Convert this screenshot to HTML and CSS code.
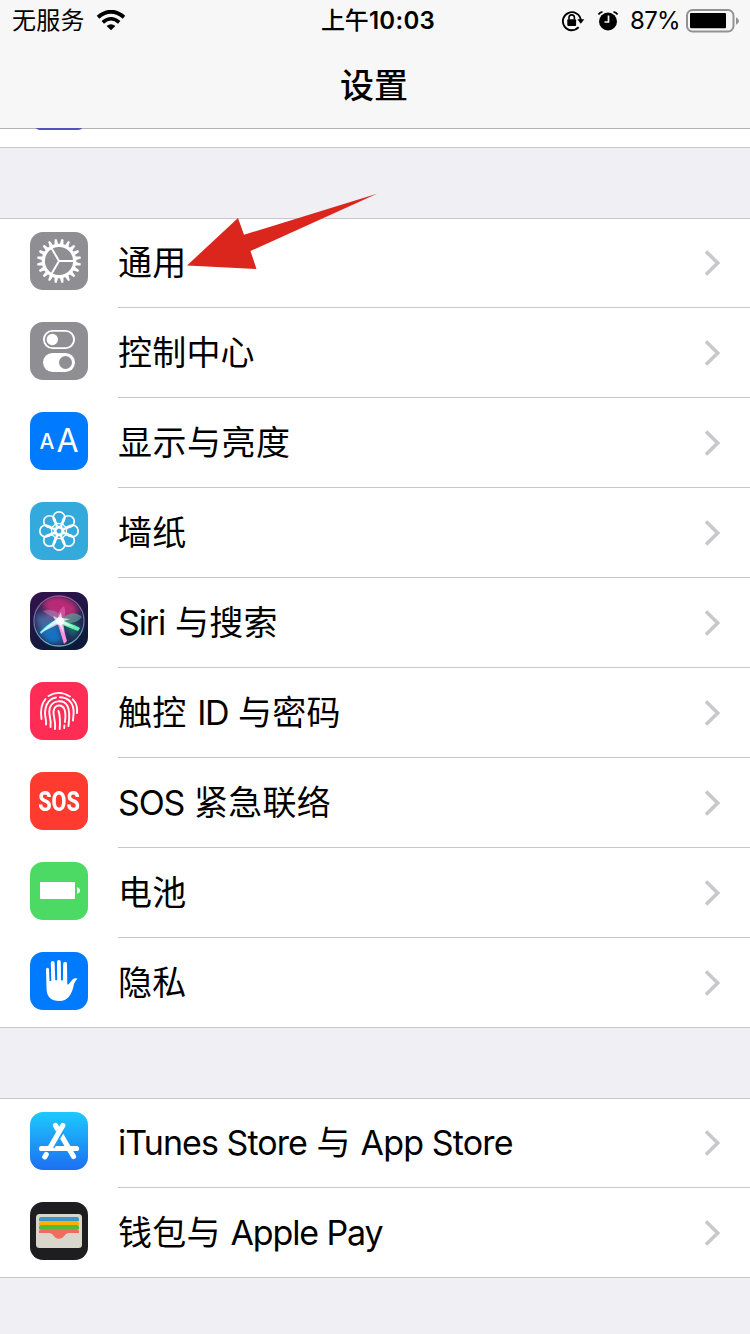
FILE: index.html
```html
<!DOCTYPE html>
<html lang="zh-CN">
<head>
<meta charset="utf-8">
<title>设置</title>
<link rel="stylesheet" href="styles.css">
</head>
<body>
<svg class="defs" width="0" height="0" aria-hidden="true">
  <defs>
    <symbol id="chevron" viewBox="0 0 18 28"><path d="M3 2.500 14.700 14 3 25.500" fill="none" stroke="#c7c7cc" stroke-width="3.600"/></symbol>
    <path id="tooth" d="M27.100 12.500 28 7h2l.9 5.500z"/>
    <g id="teeth">
      <use href="#tooth"/><use href="#tooth" transform="rotate(18 29 29)"/><use href="#tooth" transform="rotate(36 29 29)"/>
      <use href="#tooth" transform="rotate(54 29 29)"/><use href="#tooth" transform="rotate(72 29 29)"/>
    </g>
    <path id="petal" d="M23.200 15.600A5.800 5.800 0 0 1 34.800 15.600Q34.600 19.500 29 25.600 23.400 19.500 23.200 15.600z"/>
  </defs>
</svg>

<header class="header">
  <div class="status">
    <div class="status-left">
      <span>无服务</span>
      <svg width="30" height="22" viewBox="0 0 30 22" fill="none" stroke="#000"><path d="M2 7.200Q15-3.800 28 7.200" stroke-width="3.800"/><path d="M6.800 12.300Q15 5.200 23.200 12.300" stroke-width="3.600"/><path d="M10.600 16Q15 12.400 19.400 16L15 20.300z" fill="#000" stroke="none"/></svg>
    </div>
    <div class="status-time">上午<b>10:03</b></div>
    <div class="status-right">
      <svg class="lock" width="24" height="22" viewBox="0 0 24 22"><path d="M17.600 17.200A9 9 0 1 1 19.800 10" fill="none" stroke="#000" stroke-width="1.900"/><path d="M16.300 9.200h7l-3.500 4.600z"/><rect x="6.300" y="9.200" width="8.800" height="6.800" rx="1"/><path d="M8 9.500V7.600a2.700 2.700 0 0 1 5.400 0v1.900" fill="none" stroke="#000" stroke-width="1.600"/></svg>
      <svg class="alarm" width="22" height="22" viewBox="0 0 22 22"><circle cx="11" cy="11.500" r="9"/><path d="M1.500 4.500Q2.800 2.200 5.500 1.900M20.500 4.500Q19.200 2.200 16.500 1.900" fill="none" stroke="#000" stroke-width="1.800"/><path d="M11.500 5.500V12H7.500" fill="none" stroke="#f7f7f7" stroke-width="1.700"/></svg>
      <span class="percent">87%</span>
      <svg width="54" height="24" viewBox="0 0 54 24"><rect x="1" y="1" width="46.500" height="21.500" rx="5.500" fill="none" stroke="#929292" stroke-width="2"/><rect x="4" y="4" width="36" height="15.300" rx="1"/><path d="M50 8.300Q53 9.800 53 12t-3 3.700z" fill="#929292"/></svg>
    </div>
  </div>
  <h1 class="title">设置</h1>
</header>

<div class="previous"><span class="previous-icon"></span></div>

<main>
<section class="group">
  <div class="row">
    <svg class="icon gray" viewBox="0 0 58 58" fill="#fff"><g transform="rotate(9 29 29)"><use href="#teeth"/><use href="#teeth" transform="rotate(90 29 29)"/><use href="#teeth" transform="rotate(180 29 29)"/><use href="#teeth" transform="rotate(270 29 29)"/></g><g fill="none" stroke="#fff"><circle cx="29" cy="29" r="15.700" stroke-width="3.200"/><path d="M29 29H45M29 29 21 15.200M29 29 21 42.800" stroke-width="2"/></g></svg>
    <div class="cell"><span class="label">通用</span><svg class="chevron"><use href="#chevron"/></svg></div>
    <svg class="pointer" width="194" height="78" viewBox="0 0 194 78"><path d="M2 73.500 53 26 59 42.800 192 1.800 65.500 59 71.500 77z" fill="#db261e"/></svg>
  </div>
  <div class="row">
    <svg class="icon gray" viewBox="0 0 58 58"><rect x="13.900" y="8.900" width="30.200" height="17.200" rx="8.600" fill="none" stroke="#fff" stroke-width="1.900"/><circle cx="22.300" cy="17.500" r="5.700" fill="#fff"/><rect x="13" y="31" width="32" height="19" rx="9.500" fill="#fff"/><circle cx="35.500" cy="40.500" r="6.500" fill="#8e8e93"/></svg>
    <div class="cell"><span class="label">控制中心</span><svg class="chevron"><use href="#chevron"/></svg></div>
  </div>
  <div class="row">
    <div class="icon blue letters"><span class="small-a">A</span><span class="big-a">A</span></div>
    <div class="cell"><span class="label wide">显示与亮度</span><svg class="chevron"><use href="#chevron"/></svg></div>
  </div>
  <div class="row">
    <svg class="icon sky" viewBox="0 0 58 58" fill="none" stroke="#fff" stroke-width="1.700">
      <circle cx="29" cy="29" r="3.400"/>
      <g id="quad"><use href="#petal"/><use href="#petal" transform="rotate(45 29 29)"/></g>
      <use href="#quad" transform="rotate(90 29 29)"/><use href="#quad" transform="rotate(180 29 29)"/><use href="#quad" transform="rotate(270 29 29)"/>
      <g id="arcs" stroke-width="1.300"><path id="arc" d="M23.300 16.500Q24.500 21.700 29 21.700T34.700 16.500"/><use href="#arc" transform="rotate(45 29 29)"/></g>
      <use href="#arcs" transform="rotate(90 29 29)"/><use href="#arcs" transform="rotate(180 29 29)"/><use href="#arcs" transform="rotate(270 29 29)"/>
    </svg>
    <div class="cell"><span class="label">墙纸</span><svg class="chevron"><use href="#chevron"/></svg></div>
  </div>
  <div class="row">
    <svg class="icon" viewBox="0 0 58 58">
      <defs>
        <linearGradient id="siri-bg" x1="0" y1="0" x2=".5" y2="1"><stop offset="0" stop-color="#35124e"/><stop offset="1" stop-color="#0c1b3b"/></linearGradient>
        <linearGradient id="siri-ring" x1="0" y1="0" x2="0" y2="1"><stop offset="0" stop-color="#a35191"/><stop offset=".5" stop-color="#61779f"/><stop offset="1" stop-color="#61b2b8"/></linearGradient>
        <filter id="soft" x="-50%" y="-50%" width="200%" height="200%"><feGaussianBlur stdDeviation="3.200"/></filter>
        <filter id="glow" x="-50%" y="-50%" width="200%" height="200%"><feGaussianBlur stdDeviation=".7"/></filter>
        <clipPath id="orb"><circle cx="29" cy="29" r="24"/></clipPath>
      </defs>
      <rect width="58" height="58" fill="url(#siri-bg)"/>
      <g clip-path="url(#orb)">
        <circle cx="29" cy="29" r="25" fill="#252554"/>
        <g filter="url(#soft)"><path d="M12 8Q30-4 48 14L46 26 29 28 14 18z" fill="#b82a74"/><path d="M4 22 26 23 27 30 10 40z" fill="#4a68a0"/><path d="M8 41 28 31 34 50 20 53z" fill="#1273c4"/><path d="M32 29 50 34 43 46z" fill="#18796f"/></g>
        <g filter="url(#glow)"><path d="M13 19Q28 15 34 29 20 25 13 19z" fill="#a583ba" opacity=".55"/><path d="M27 31Q28 17 34 14 38 24 30 31z" fill="#e06ab9" opacity=".6"/><path d="M29 29Q42 16 52 25 45 34 29 30z" fill="#55b6a1" opacity=".6"/><path d="M10 40Q22 27 31 27L29 31Q20 33 11 42z" fill="#63f1ff"/><path d="M27 28 33 27Q34 40 37 49L34 52Q30 39 27 30z" fill="#f692d5"/><path d="M28 27Q41 31 50 36L48 39Q37 35 28 31z" fill="#66efb0"/><path d="M10 41 25 28 23 24 28 26 31 20 32 26 40 27 34 29 44 35 32 32 34 42 29 32z" fill="#fff" opacity=".7"/><circle cx="30" cy="29" r="3.800" fill="#fff"/></g>
      </g>
      <circle cx="29" cy="29" r="25" fill="none" stroke="url(#siri-ring)" stroke-width="1.300"/>
    </svg>
    <div class="cell"><span class="label"><span class="siri">Siri</span> 与搜索</span><svg class="chevron"><use href="#chevron"/></svg></div>
  </div>
  <div class="row">
    <svg class="icon pink" viewBox="0 0 58 58" fill="none" stroke="#fff" stroke-width="1.900" stroke-linecap="round">
      <path d="M18.500 14Q29 7.500 40 14.500"/><path d="M11.500 37Q9.500 24 15.500 17M42.800 17.300Q48 22.500 47 31"/>
      <path d="M16 42.500C17 37 13.500 34 15.500 26.500 17 20 21 16.300 26 15.500M30 15.200C40 15.500 44 23 43.600 31L43 38.500"/>
      <path d="M20.500 45C22 36 17.500 33 19.800 26 22.500 18 33.500 17 37.500 24 40 29 39.500 36 38.500 44"/>
      <path d="M25 47C26 37 22 32 24 27.500 26 22 32.500 22.500 34.500 27.500 36 32 35.500 36 34.900 40"/>
      <path d="M29.700 47C30.500 37 30 33 28.500 29"/><path d="M34.400 43.500 34.200 46"/>
    </svg>
    <div class="cell"><span class="label">触控 <span class="id">ID</span> 与密码</span><svg class="chevron"><use href="#chevron"/></svg></div>
  </div>
  <div class="row">
    <div class="icon red sos"><span>SOS</span></div>
    <div class="cell"><span class="label"><span class="sos-label">SOS</span> 紧急联络</span><svg class="chevron"><use href="#chevron"/></svg></div>
  </div>
  <div class="row">
    <svg class="icon green" viewBox="0 0 58 58" fill="#fff"><rect x="10" y="20" width="35" height="17" rx=".8"/><path d="M47 25.300Q50 26 50 28.500T47 31.700z"/></svg>
    <div class="cell"><span class="label">电池</span><svg class="chevron"><use href="#chevron"/></svg></div>
  </div>
  <div class="row">
    <svg class="icon blue" viewBox="0 0 58 58" fill="#fff"><path d="M16 17.300a1.500 1.500 0 0 1 3 0L19.500 29.200 21.300 28.700 20.800 10.800a1.900 1.900 0 0 1 3.800 0L25.300 28.300H27.200L27 9.900a1.900 1.900 0 0 1 3.800 0L31 28.300 32.900 28.600 33.200 11.700a1.900 1.900 0 0 1 3.800 0L37.300 32.200Q38.200 33 39 31.800L42.500 27.500Q44.500 25.500 47.600 26.500 45.500 28.500 44 32 41 49 29.500 49 16.500 49 16.500 36z"/></svg>
    <div class="cell"><span class="label">隐私</span><svg class="chevron"><use href="#chevron"/></svg></div>
  </div>
</section>

<section class="group">
  <div class="row">
    <svg class="icon store" viewBox="0 0 58 58" fill="none" stroke="#fff" stroke-width="5.200" stroke-linecap="round"><path d="M11.500 36.500H46.500M25.500 13.500 43.500 44.500"/><path d="M31.400 18 21.400 34.300" stroke="#1b9df9" stroke-width="7" stroke-linecap="butt"/><path d="M32.800 13.500 20.200 35.500M16.200 42.500 14.800 44.800"/></svg>
    <div class="cell"><span class="label"><span class="itunes">iTunes Store</span> 与 <span class="appstore">App Store</span></span><svg class="chevron"><use href="#chevron"/></svg></div>
  </div>
  <div class="row">
    <svg class="icon wallet" viewBox="0 0 58 58"><rect x="6" y="12" width="46" height="34" rx="3.500" fill="#d9d7cb"/><path d="M9 19V17q0-2 2-2H47q2 0 2 2v2z" fill="#3c97c9"/><path d="M9 23V21q0-2 2-2H47q2 0 2 2v2z" fill="#ffb003"/><path d="M9 27V25q0-2 2-2H47q2 0 2 2v2z" fill="#53bb36"/><path d="M9 31V29q0-2 2-2H47q2 0 2 2v2H39C34.500 31 34 36.800 29 36.800S23.500 31 19 31z" fill="#f16c5e"/></svg>
    <div class="cell"><span class="label">钱包与 <span class="pay">Apple Pay</span></span><svg class="chevron"><use href="#chevron"/></svg></div>
  </div>
</section>
</main>
</body>
</html>
```
FILE: styles.css
```css
* { box-sizing: border-box; }
body {
  margin: 0;
  width: 750px;
  height: 1334px;
  overflow: hidden;
  background: #efeff4;
  color: #000;
  font-family: Inter, "Noto Sans CJK SC", sans-serif;
}
svg { display: block; flex: none; }
.defs { position: absolute; }
.header {
  height: 129px;
  background: #f7f7f7;
  border-bottom: 1px solid #b2b2b2;
}
.status {
  display: grid;
  grid-template-columns: 1fr auto 1fr;
  height: 41px;
  padding: 1px 10px 0 12px;
  font-size: 24px;
  line-height: 40px;
}
.status-left, .status-right { display: flex; align-items: center; }
.status-left { gap: 11px; letter-spacing: 0.2px; }
.status-left svg { margin-top: -1px; }
.status-time { font-weight: 500; padding-left: 4px; }
.status-time b { font-weight: 600; letter-spacing: 0.3px; }
.status-right { justify-content: flex-end; }
.status-right svg { margin-top: -1px; }
.lock { margin-right: 12px; }
.alarm { margin-right: 11px; }
.percent { margin-right: 6px; letter-spacing: -0.7px; }
.title {
  margin: 0;
  height: 88px;
  padding-right: 2px;
  line-height: 89px;
  text-align: center;
  font-size: 34px;
  font-weight: 500;
}
.previous {
  height: 19px;
  background: #fff;
  border-bottom: 1px solid #c8c7cc;
  padding-left: 36px;
}
/* Bottom edge of the icon scrolled under the header, overlapping its hairline */
.previous-icon {
  position: relative;
  top: -1px;
  display: block;
  width: 46px;
  height: 2px;
  border-radius: 0 0 6px 6px / 0 0 2px 2px;
  background: #5551bd;
}
.group {
  margin-top: 70px;
  background: #fff;
  box-shadow: inset 0 1px #c8c7cc, inset 0 -1px #c8c7cc;
}
.row {
  position: relative;
  display: flex;
  align-items: center;
  height: 90px;
  padding-left: 30px;
}
.icon {
  width: 58px;
  height: 58px;
  margin: 0 30px 4px 0;
  border-radius: 13px;
  overflow: hidden;
  flex: none;
}
.cell {
  display: flex;
  flex: 1;
  align-items: center;
  justify-content: space-between;
  height: 90px;
  padding-right: 29px;
  border-bottom: 1px solid #c8c7cc;
}
.label { font-size: 34px; line-height: 88px; letter-spacing: 0.2px; white-space: pre; }
.wide { letter-spacing: 0.5px; }
.siri { letter-spacing: -1.1px; }
.id { letter-spacing: -1.3px; margin-left: 1px; }
.sos-label { letter-spacing: -1.1px; }
.itunes { letter-spacing: -0.95px; }
.appstore { letter-spacing: -0.85px; }
.pay { letter-spacing: -1.1px; }
.chevron { width: 18px; height: 28px; margin-top: 1px; }
.pointer { position: absolute; left: 185px; top: -26px; z-index: 1; }
.gray { background: #8e8e93; }
.blue { background: #007aff; }
.sky { background: #34aadc; }
.pink { background: #ff2d55; }
.red { background: #ff3b30; }
.green { background: #4cd964; }
.store { background: linear-gradient(#1dc9fd, #1d6ff2); }
.wallet { background: #1e1e20; }
.letters {
  display: flex;
  align-items: baseline;
  justify-content: center;
  gap: 2px;
  color: #fff;
  line-height: 58px;
}
.small-a { font-size: 21px; font-weight: 500; margin-bottom: 3px; transform: translateY(-3px); }
.big-a { font-size: 32px; font-weight: 400; }
.sos {
  display: flex;
  align-items: center;
  justify-content: center;
  color: #fff;
  font-family: Roboto, sans-serif;
  font-size: 27px;
  font-weight: 800;
}
.sos span { transform: scaleX(.8); margin-top: 1px; }
```
